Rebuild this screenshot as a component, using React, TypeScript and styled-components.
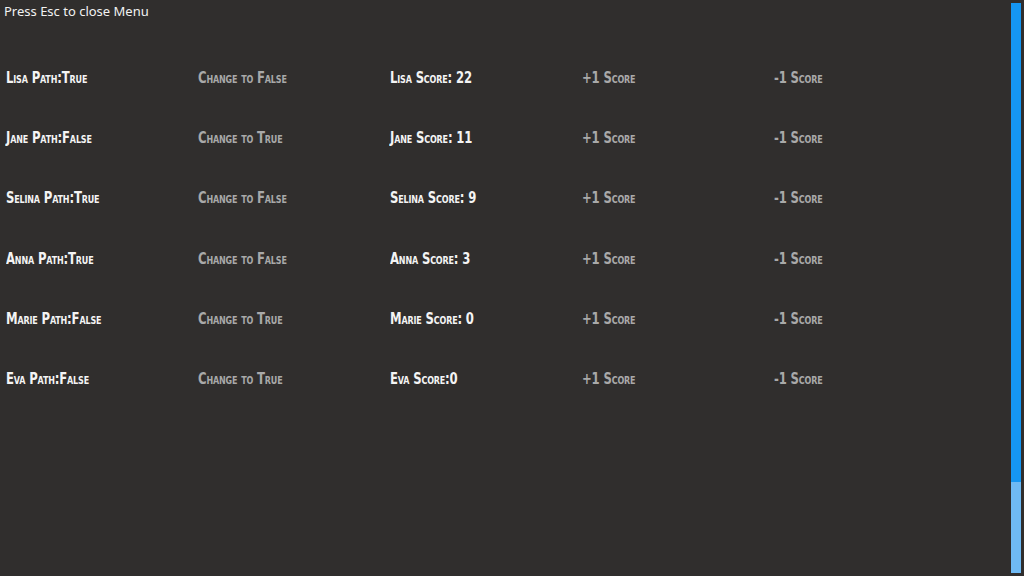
import React from 'react';
import styled, { createGlobalStyle } from 'styled-components';

const GlobalStyle = createGlobalStyle`
    html, body {
        margin: 0;
        padding: 0;
        background: #302e2d;
        overflow: hidden;
    }
`;

const Page = styled.div`
    display: flex;
    width: 1024px;
    height: 576px;
    background: #302e2d;
`;

const Main = styled.div`
    flex: 1;
    display: flex;
    flex-direction: column;
`;

const Hint = styled.div`
    font-family: "Noto Sans", "Open Sans", sans-serif;
    font-size: 13px;
    line-height: 22px;
    color: #f2f2f2;
    padding-left: 4px;
`;

const Table = styled.div`
    display: grid;
    grid-template-columns: repeat(5, 192px);
    grid-auto-rows: 60.3px;
    margin-top: 25px;
`;

const Cell = styled.div<{ $action?: boolean }>`
    display: flex;
    align-items: center;
    padding-left: 6px;
    font-family: "DejaVu Sans Condensed", "DejaVu Sans", sans-serif;
    font-weight: bold;
    font-variant: small-caps;
    font-size: 16px;
    letter-spacing: -0.2px;
    white-space: nowrap;
    color: ${p => (p.$action ? '#a9a9a9' : '#f4f4f4')};
    cursor: ${p => (p.$action ? 'pointer' : 'default')};
`;

const Label = styled.span`
    display: inline-block;
    transform: scaleX(0.81);
    transform-origin: left center;
`;

const Track = styled.div`
    width: 10px;
    margin: 3px 3px 3px 0;
    display: flex;
    flex-direction: column;
    background: #6fbaf4;
`;

const Fill = styled.div`
    background: #1596f2;
`;

const players = [
    { name: 'Lisa', path: true, score: 'Lisa Score: 22' },
    { name: 'Jane', path: false, score: 'Jane Score: 11' },
    { name: 'Selina', path: true, score: 'Selina Score: 9' },
    { name: 'Anna', path: true, score: 'Anna Score: 3' },
    { name: 'Marie', path: false, score: 'Marie Score: 0' },
    { name: 'Eva', path: false, score: 'Eva Score:0' },
];

export default function App() {
    const progress = 479 / 570;
    return (
        <>
            <GlobalStyle />
            <Page>
                <Main>
                    <Hint>Press Esc to close Menu</Hint>
                    <Table>
                        {players.map(p => (
                            <React.Fragment key={p.name}>
                                <Cell><Label>{p.name} Path:{p.path ? 'True' : 'False'}</Label></Cell>
                                <Cell $action><Label>Change to {p.path ? 'False' : 'True'}</Label></Cell>
                                <Cell><Label>{p.score}</Label></Cell>
                                <Cell $action><Label>+1 Score</Label></Cell>
                                <Cell $action><Label>-1 Score</Label></Cell>
                            </React.Fragment>
                        ))}
                    </Table>
                </Main>
                <Track>
                    <Fill style={{ height: `${progress * 100}%` }} />
                </Track>
            </Page>
        </>
    );
}
